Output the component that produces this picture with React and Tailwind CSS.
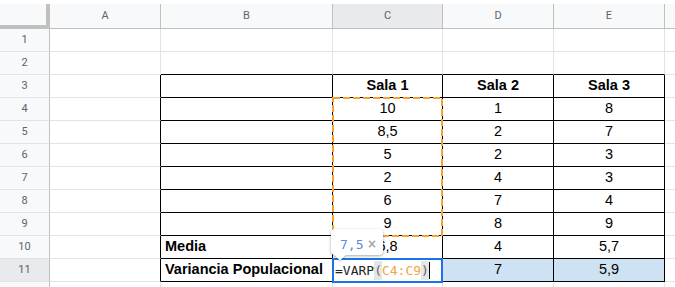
import React from 'react';

const cols = ['A', 'B', 'C', 'D', 'E', 'F'];

// rows 3..11 hold the table (B..E)
const data = {
  3: ['', 'Sala 1', 'Sala 2', 'Sala 3'],
  4: ['', '10', '1', '8'],
  5: ['', '8,5', '2', '7'],
  6: ['', '5', '2', '3'],
  7: ['', '2', '4', '3'],
  8: ['', '6', '7', '4'],
  9: ['', '9', '8', '9'],
  10: ['Media', '6,8', '4', '5,7'],
  11: ['Variancia Populacional', '', '7', '5,9'],
};

function Cell({ r, c }) {
  const inTable = r >= 3 && r <= 11;
  const rightBlack = inTable && c <= 4;
  const bottomBlack = r >= 2 && r <= 11 && c >= 1 && c <= 4;
  const row = data[r];
  let text = '';
  if (row && c >= 1 && c <= 4) text = row[c - 1];
  const bold = r === 3 || (c === 1 && (r === 10 || r === 11));
  const left = c === 1;
  const blue = r === 11 && (c === 3 || c === 4);

  return (
    <div
      className={
        'flex items-center overflow-hidden whitespace-nowrap border-r border-b text-[14.5px] text-black ' +
        (rightBlack ? 'border-r-black ' : 'border-r-[#e2e3e3] ') +
        (bottomBlack ? 'border-b-black ' : 'border-b-[#e2e3e3] ') +
        (bold ? 'font-bold ' : '') +
        (left ? 'justify-start pl-[4px] ' : 'justify-center ') +
        (blue ? 'bg-[#cfe2f3]' : 'bg-white')
      }
      style={{ fontFamily: '"Liberation Sans", Arial, sans-serif' }}
    >
      {text}
    </div>
  );
}

export default function App() {
  const rows = [1, 2, 3, 4, 5, 6, 7, 8, 9, 10, 11, 12];

  return (
    <div className="w-[675px] h-[287px] overflow-hidden bg-white">
      <div className="h-[4px] bg-white" />
      <div className="relative">
        <div className="grid grid-cols-[50px_111px_172px_110px_111px_111px_111px] grid-rows-[25px_repeat(12,23px)]">
          {/* corner */}
          <div className="bg-[#f8f9fa] border-r-4 border-b-4 border-[#c0c0c0]" />
          {cols.map((c) => (
            <div
              key={c}
              className={
                'flex items-center justify-center border-r border-b border-[#c0c0c0] text-[11px] text-[#5f6368] ' +
                (c === 'C' ? 'bg-[#e8eaed]' : 'bg-[#f8f9fa]')
              }
              style={{ fontFamily: 'Roboto, Arial, sans-serif' }}
            >
              {c !== 'F' ? c : ''}
            </div>
          ))}
          {rows.map((r) => (
            <React.Fragment key={r}>
              <div
                className={
                  'flex items-center justify-center border-r border-r-[#c0c0c0] border-b border-b-[#e2e3e3] text-[11px] text-[#5f6368] ' +
                  (r === 11 ? 'bg-[#e8eaed]' : 'bg-[#f8f9fa]')
                }
                style={{ fontFamily: 'Roboto, Arial, sans-serif' }}
              >
                {r < 12 ? r : ''}
              </div>
              {cols.map((c, i) => (
                <Cell key={c} r={r} c={i} />
              ))}
            </React.Fragment>
          ))}
        </div>

        {/* copied range C4:C9 */}
        <svg className="absolute left-[332px] top-[93px]" width="111" height="140">
          <rect x="1" y="1" width="109" height="138" fill="none" stroke="#f7a02b" strokeWidth="2" strokeDasharray="7 3" />
        </svg>

        {/* active cell C11 with formula */}
        <div
          className="absolute left-[332px] top-[254px] w-[111px] h-[25px] border-2 border-[#1a73e8] bg-white flex items-center pl-px text-[13px] text-[#222]"
          style={{ fontFamily: '"DejaVu Sans Mono", "Liberation Mono", monospace' }}
        >
          <span>=VARP</span>
          <span className="bg-[#e6e6e6] text-[#666]">(</span>
          <span className="text-[#f5a33c]">C4:C9</span>
          <span className="bg-[#e6e6e6] text-[#666]">)</span>
          <span className="w-px h-[17px] bg-black" />
        </div>

        {/* result tooltip */}
        <div className="absolute left-[331px] top-[225px] w-[52px] h-[26px] bg-white rounded-sm shadow-[0_1px_3px_rgba(0,0,0,0.35)]">
          <div className="absolute left-[5px] bottom-[-4px] w-[8px] h-[8px] rotate-45 bg-white shadow-[1px_1px_1px_rgba(0,0,0,0.2)]" />
          <div
            className="relative flex items-center gap-[4px] pl-[9px] pt-[4px] text-[13px]"
            style={{ fontFamily: '"DejaVu Sans Mono", "Liberation Mono", monospace' }}
          >
            <span className="text-[#5b8dde]">7,5</span>
            <span className="text-[#9aa0a6] text-[15px]">×</span>
          </div>
        </div>
      </div>
    </div>
  );
}
